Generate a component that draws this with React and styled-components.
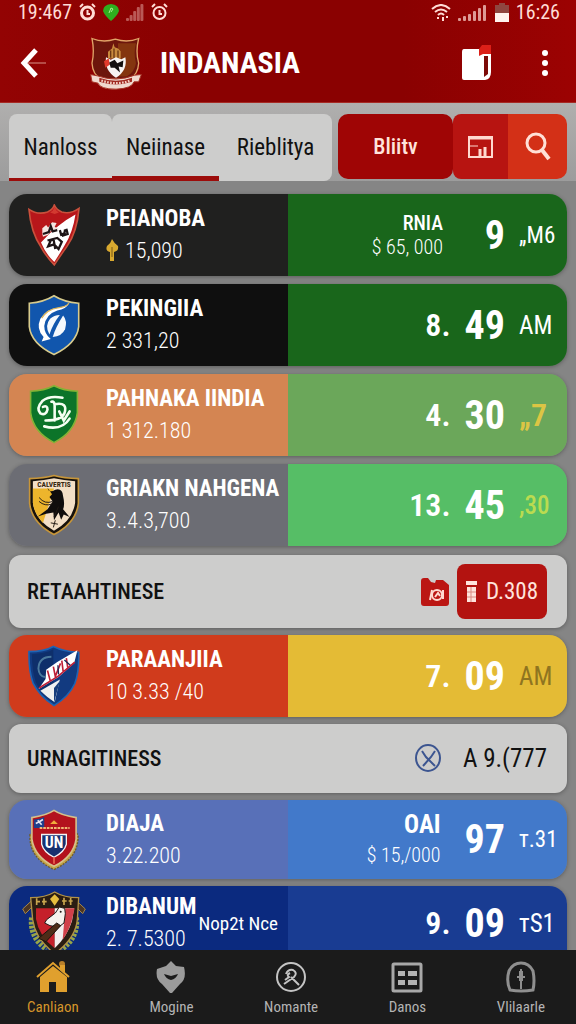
import React from "react";
import styled, { createGlobalStyle } from "styled-components";

const GlobalStyle = createGlobalStyle`
  * {
    box-sizing: border-box;
  }
  body {
    margin: 0;
    background: #858585;
    font-family: "Roboto Condensed", "Liberation Sans Narrow", Roboto, sans-serif;
  }
  button {
    font-family: inherit;
    border: 0;
    padding: 0;
    background: none;
    color: inherit;
    cursor: pointer;
  }
  svg {
    display: block;
    flex: none;
  }
`;

const Screen = styled.div`
  display: flex;
  flex-direction: column;
  height: 100vh;
  background: #858585;
`;

const Header = styled.header`
  flex: none;
  color: #fff;
  background: linear-gradient(90deg, #930303, #8a0101 30%, #8a0101 70%, #9c0202);
  border-bottom: 1px solid #a62a24;
`;

const StatusBar = styled.div`
  display: flex;
  align-items: center;
  height: 24px;
  padding: 0 16px 0 18px;
  gap: 7px;
  color: #ffdcd5;
`;

const Clock = styled.span`
  font-size: 20px;
  line-height: 24px;
`;

const Spacer = styled.span`
  flex: 1;
`;

const TitleBar = styled.div`
  display: flex;
  align-items: center;
  height: 78px;
  padding: 0 27px 0 20px;
`;

const BackButton = styled.button`
  margin-right: 42px;
`;

const Title = styled.h1`
  flex: 1;
  margin: 0 0 0 18px;
  font-size: 30px;
  line-height: 40px;
  font-weight: 700;
`;

const MoreButton = styled.button`
  margin-left: 48px;
`;

const Filters = styled.div`
  flex: none;
  display: flex;
  align-items: flex-start;
  gap: 6px;
  padding: 11px 9px 0;
  background: linear-gradient(180deg, #b0afae, #9c9c9c);
`;

const Tabs = styled.nav`
  flex: 323;
  display: flex;
  height: 67px;
`;

const Tab = styled.button`
  flex: ${(p) => p.$grow};
  font-size: 23px;
  line-height: 28px;
  color: #111;
  background: #cdcdcc;
  box-shadow: inset 0 -${(p) => p.$line}px 0 #9c0c0a;
  border-radius: ${(p) => p.$radius};
`;

const Actions = styled.div`
  flex: 229;
  display: flex;
  height: 65px;
`;

const Action = styled.button`
  flex: ${(p) => p.$grow};
  display: flex;
  align-items: center;
  justify-content: center;
  font-size: 22px;
  font-weight: 500;
  color: #ffe3dc;
  background: ${(p) => p.$bg};
  border-radius: ${(p) => p.$radius};
`;

const List = styled.main`
  flex: 1;
  min-height: 0;
  overflow-y: auto;
  scrollbar-width: none;
  padding: 13px 9px 0;
`;

const Group = styled.section`
  display: flex;
  flex-direction: column;
  gap: ${(p) => p.$gap}px;
  margin-bottom: 9px;
`;

const Row = styled.article`
  flex: none;
  display: grid;
  grid-template-columns: 1fr 1fr;
  height: ${(p) => p.$height || 82}px;
  border-radius: ${(p) => (p.$open ? "18px 18px 0 0" : "18px")};
  overflow: hidden;
  color: #fff;
  box-shadow: 0 1px 4px rgba(0, 0, 0, 0.3);
`;

const Team = styled.div`
  display: flex;
  align-items: center;
  min-width: 0;
  padding-left: 13px;
  background: ${(p) => p.$bg};
`;

const CrestBox = styled.div`
  flex: none;
  display: flex;
  justify-content: center;
  width: 64px;
  margin-right: 20px;
`;

const TeamText = styled.div`
  white-space: nowrap;
`;

const Name = styled.h2`
  margin: 0;
  font-size: 23px;
  line-height: 32px;
  font-weight: 700;
`;

const Detail = styled.p`
  display: flex;
  align-items: center;
  gap: 6px;
  margin: 0;
  font-size: 22px;
  line-height: 32px;
  font-weight: 300;
`;

const Note = styled.span`
  margin-left: 2px;
  font-size: 19px;
  white-space: nowrap;
`;

const Score = styled.div`
  display: flex;
  align-items: center;
  justify-content: flex-end;
  padding-right: 10px;
  background: ${(p) => p.$bg};
`;

const Prize = styled.div`
  margin-right: 24px;
  text-align: right;
  font-size: 20px;
  line-height: ${(p) => (p.$strong ? 30 : 24)}px;
  font-weight: 300;
`;

const PrizeName = styled.div`
  font-size: ${(p) => (p.$strong ? 25 : 20)}px;
  font-weight: ${(p) => (p.$strong ? 700 : 500)};
`;

const Whole = styled.span`
  margin-right: 14px;
  font-size: 32px;
  font-weight: 600;
`;

const Big = styled.span`
  min-width: 38px;
  margin-right: 14px;
  text-align: right;
  font-size: 40px;
  font-weight: 700;
`;

const Suffix = styled.span`
  width: 38px;
  font-size: ${(p) => p.$size || 25}px;
  font-weight: ${(p) => p.$weight || 400};
  white-space: nowrap;
  color: ${(p) => p.$color || "#fff"};
`;

const Panel = styled.section`
  flex: none;
  display: flex;
  align-items: center;
  height: ${(p) => p.$height}px;
  padding: 0 20px 0 18px;
  border-radius: 12px;
  color: #111;
  background: #cdcdcc;
  box-shadow: 0 1px 4px rgba(0, 0, 0, 0.3);
`;

const PanelTitle = styled.h3`
  flex: 1;
  margin: 0;
  font-size: 22px;
  line-height: 28px;
  font-weight: 500;
`;

const PanelButton = styled.button`
  display: flex;
  align-items: center;
  justify-content: center;
  gap: 9px;
  width: 90px;
  height: 55px;
  margin-left: 8px;
  border-radius: 8px;
  font-size: 23px;
  color: #ffe3dc;
  background: #b31310;
`;

const PanelValue = styled.span`
  margin-left: 21px;
  font-size: 25px;
`;

const BottomNav = styled.nav`
  flex: none;
  display: flex;
  justify-content: space-between;
  height: 74px;
  padding: 11px 31px 0 27px;
  background: #1b1b1b;
`;

const NavItem = styled.a`
  display: flex;
  flex-direction: column;
  align-items: center;
  gap: 4px;
  font-size: 15px;
  line-height: 20px;
  text-decoration: none;
  color: ${(p) => (p.$active ? "#d5952a" : "#b4b4b4")};
`;

const Shield = ({ children }) => (
  <svg width="52" height="62" viewBox="0 0 160 190" aria-hidden="true">
    {children}
  </svg>
);

const crests = {
  red: (
    <Shield>
      <path d="M3 16Q30 34 60 24Q76 18 81 3Q88 18 104 24Q130 32 157 13Q151 86 120 130Q95 165 81 187Q55 160 40 132Q9 86 3 16Z" fill="#b8161a" stroke="#c9503c" strokeWidth="5" />
      <path d="M146 32Q90 62 40 118Q56 156 81 178Q98 152 112 128Q138 88 146 32Z" fill="#fff" />
      <path d="M76 20L82 8L88 20L95 26L82 30L68 26Z" fill="#d33a30" />
      <path d="M44 74l12 -10 6 8 12 -16 14 2 -6 12 12 4 -8 10 -14 -4 -10 14 -16 6 -2 -10z" fill="#f3e4e0" />
      <path d="M46 92l18 -6 6 -18 6 16 14 -4M60 112l30 -8 14 12 -10 22 -14 -14 -18 6 8 -18M98 80l4 14 10 -4 2 -12M118 76l4 16 -18 6M78 106l6 32" fill="none" stroke="#1d1416" strokeWidth="7" />
    </Shield>
  ),
  blue: (
    <Shield>
      <path d="M4 28Q50 24 80 5Q110 24 156 28V100Q150 152 80 186Q10 152 4 100Z" fill="#1156ad" stroke="#d8cb8c" strokeWidth="5" />
      <path d="M126 28Q118 46 90 50Q54 62 50 98Q50 122 70 138L42 146L48 132Q24 108 38 76Q58 44 94 42Q114 40 126 28Z" fill="#fff" />
      <path d="M126 28Q118 40 92 42Q60 46 42 74" fill="none" stroke="#d8b35a" strokeWidth="4" />
      <path d="M108 66Q122 82 114 108Q104 130 76 132Q84 104 108 66Z" fill="#f4f8fc" />
      <path d="M98 64Q76 92 66 124Q50 98 68 76Q80 64 98 64Z" fill="#f4f8fc" />
    </Shield>
  ),
  green: (
    <Shield>
      <path d="M8 22Q50 20 80 5Q110 20 152 22V88Q144 148 80 180Q16 148 8 88Z" fill="#0c7429" stroke="#85b236" strokeWidth="5" />
      <path d="M106 42Q66 34 44 52Q24 74 38 90Q56 98 60 78Q60 64 46 70M72 54Q82 52 82 66V112M82 62Q124 54 112 90Q102 112 54 112M96 84L110 112L128 84M50 130Q104 144 128 106" fill="none" stroke="#f5fff2" strokeWidth="8" strokeLinecap="round" />
    </Shield>
  ),
  gold: (
    <Shield>
      <path d="M5 14Q50 12 80 4Q110 12 155 14V90Q148 150 80 186Q12 150 5 90Z" fill="#17120c" stroke="#c7963a" strokeWidth="5" />
      <path d="M15 22Q50 20 80 13Q110 20 145 22V88Q138 142 80 174Q22 142 15 88Z" fill="#f3dfc6" />
      <path d="M15 44H80L46 150Q18 120 15 88Z" fill="#edb52c" />
      <text x="80" y="40" textAnchor="middle" fontSize="23" fontWeight="700" fill="#35250e">
        CALVERTIS
      </text>
      <path d="M60 42Q64 60 84 48Q106 42 108 68Q114 92 108 108L128 132L110 124L102 140L94 118L80 142L78 118L56 122L30 130L60 108L76 84L66 70L74 62Z" fill="#100d0c" />
      <path d="M34 72Q52 94 76 84M34 84Q52 100 74 92M94 100L80 132M84 142L78 164M70 150L92 154" fill="none" stroke="#221a14" strokeWidth="3" />
    </Shield>
  ),
  navy: (
    <Shield>
      <path d="M3 20Q50 20 78 4Q110 20 156 22Q158 80 144 118Q126 158 80 186Q36 158 16 118Q2 80 3 20Z" fill="#123a80" stroke="#1d64b5" strokeWidth="5" />
      <path d="M12 28Q56 26 78 13V176Q40 150 24 114Q12 80 12 28Z" fill="#0e2f6b" />
      <path d="M72 36Q34 36 32 72Q34 96 52 98" fill="none" stroke="#4b7a9e" strokeWidth="6" />
      <path d="M152 16L142 56L94 98L32 136L54 104L56 76L90 52L124 32Z" fill="#fff" />
      <path d="M60 78L68 108M78 66L84 96L100 56M104 48L108 80M118 40L122 68M34 132L92 96L144 52" fill="none" stroke="#bf1f37" strokeWidth="5" />
      <path d="M92 62L94 90M112 46L130 62" fill="none" stroke="#1a2b5a" strokeWidth="4" />
      <path d="M38 140L98 106L82 176Q56 158 38 140Z" fill="#f1f1f1" />
      <path d="M80 132V178L98 110Z" fill="#173d7c" />
    </Shield>
  ),
  crimson: (
    <Shield>
      <path d="M6 78Q2 150 80 186Q158 150 154 78L140 70H20Z" fill="#c4a548" stroke="#6c5a2a" strokeWidth="4" strokeDasharray="6 4" />
      <path d="M12 26Q56 20 80 4Q104 20 148 26V92Q140 146 80 176Q20 146 12 92Z" fill="#b3121d" stroke="#d5c08a" strokeWidth="5" />
      <path d="M18 32Q34 30 50 24V58H18Z" fill="#1f3f8c" />
      <path d="M24 44l12 -6 10 -6M30 34l12 14" fill="none" stroke="#e6e6f0" strokeWidth="5" />
      <path d="M68 46L80 34L92 46Z" fill="#f1ad3d" />
      <path d="M36 58H128" stroke="#f1ba74" strokeWidth="6" strokeDasharray="8 3" />
      <path d="M42 78H118V108Q112 132 80 148Q48 132 42 108Z" fill="#17306f" stroke="#f3f3f3" strokeWidth="4" />
      <text x="80" y="120" textAnchor="middle" fontSize="48" fontWeight="700" fill="#fff">
        UN
      </text>
      <path d="M80 148V168" stroke="#e25a4a" strokeWidth="6" />
    </Shield>
  ),
  laurel: (
    <svg width="64" height="64" viewBox="0 0 192 192" aria-hidden="true">
      <path d="M30 80Q24 140 74 174M162 80Q168 140 118 174" fill="none" stroke="#97a548" strokeWidth="18" strokeDasharray="8 4" />
      <path d="M2 54L28 30L36 42L10 68ZM190 54L164 30L156 42L182 68Z" fill="#4c3524" stroke="#a38548" strokeWidth="3" />
      <path d="M26 20Q70 20 98 3Q126 20 170 20L166 86Q160 144 98 188Q40 144 32 86Z" fill="#2a1d12" stroke="#b19247" strokeWidth="4" />
      <path d="M42 52H98V172Q50 134 42 84Z" fill="#c5202a" />
      <path d="M98 52H156L150 90Q136 136 98 172Z" fill="#f3eeee" />
      <path d="M130 52H158L148 94Q136 128 122 146Z" fill="#d1404a" />
      <path d="M42 32h12M60 32h14M120 30h14M140 30h12M44 22v20M66 22v20M126 20v22M146 20v22" stroke="#c9a64e" strokeWidth="5" />
      <path d="M84 24L98 10L112 24L98 44Z" fill="#e5bd3e" />
      <path d="M74 86L100 66L112 48L128 52L130 68L126 96L110 108L84 104L68 96Z" fill="#f6f2ee" stroke="#201818" strokeWidth="3" />
      <path d="M50 142L104 96L116 104L72 152Z" fill="#4d2c18" stroke="#1b120e" strokeWidth="3" />
      <circle cx="116" cy="62" r="3" fill="#201818" />
    </svg>
  ),
};

const GarudaLogo = () => (
  <svg width="52" height="53" viewBox="0 0 156 158" aria-hidden="true">
    <path d="M6 4Q40 18 76 6Q112 18 146 4Q136 44 146 78Q144 112 118 126H34Q8 112 6 78Q14 44 6 4Z" fill="#6d160c" stroke="#e0a468" strokeWidth="4" />
    <path d="M84 18H138Q130 46 138 78Q134 104 110 118H84Z" fill="#84350f" />
    <path d="M70 18L74 30L84 34L92 42V64H54V44L66 34Z" fill="#c88a3e" />
    <path d="M62 40V62M72 34V64M84 40V62" stroke="#6a3512" strokeWidth="4" />
    <path d="M48 60L62 68L78 60L94 66L106 60Q114 98 78 122Q42 98 48 60Z" fill="#f7f4f2" />
    <path d="M42 72L56 64L60 82L46 92Z" fill="#e23a2c" />
    <path d="M58 76L74 68L82 78L100 70L98 90L86 88L90 106L74 92L62 92Z" fill="#14100f" />
    <path d="M2 112L22 116Q78 136 134 114L154 112L146 134L132 134Q126 154 78 156Q30 156 24 138L6 134Z" fill="#f0d9cf" stroke="#a63427" strokeWidth="3" />
    <path d="M28 122Q78 140 126 122V134Q78 150 28 134Z" fill="#a02820" />
    <path d="M34 130Q78 146 122 130" fill="none" stroke="#f3cfc4" strokeWidth="7" strokeDasharray="5 4" />
  </svg>
);

const AlarmIcon = ({ bold }) => (
  <svg width="17" height="18" viewBox="0 0 34 36" fill="none" stroke="currentColor" strokeWidth={bold ? 6 : 4}>
    <circle cx="17" cy="20" r="12" />
    <path d="M2 8L8 2M32 8L26 2M17 14V22H22" strokeWidth="4" />
  </svg>
);

const PinIcon = () => (
  <svg width="16" height="17" viewBox="0 0 16 17">
    <path d="M8 0Q16 1 16 7Q14 12 8 17Q2 12 0 7Q0 1 8 0Z" fill="#2fae1e" />
    <path d="M6 9L8 4L10 5L8 8" fill="none" stroke="#a9f091" strokeWidth="1" />
  </svg>
);

const SignalBars = ({ width, heights, opacity }) => (
  <svg width={width} height="18" viewBox={`0 0 ${width} 18`} fill="currentColor" opacity={opacity}>
    {heights.map((h, i) => (
      <rect key={i} x={(i * width) / heights.length} y={18 - h} width="3" height={h} rx="1" />
    ))}
  </svg>
);

const WifiIcon = () => (
  <svg width="20" height="17" viewBox="0 0 20 17" fill="none" stroke="currentColor" strokeWidth="2">
    <path d="M1 5Q10 -3 19 5M4 8Q10 3 16 8M7 11Q10 8 13 11" />
    <path d="M7 13V15M12 13V17M16 12V14" />
  </svg>
);

const BatteryIcon = () => (
  <svg width="14" height="19" viewBox="0 0 14 19">
    <path d="M4 0H10V2H14V10H0V2H4Z" fill="#8f4640" />
    <rect y="10" width="14" height="9" fill="#fff3ef" />
  </svg>
);

const teams = [
  {
    name: "PEIANOBA",
    detail: "15,090",
    trophy: true,
    crest: "red",
    left: "#20201f",
    right: "#19661b",
    prize: ["RNIA", "$ 65, 000"],
    big: "9",
    suffix: "„M6",
    suffixSize: 23,
  },
  { name: "PEKINGIIA", detail: "2 331,20", crest: "blue", left: "#0f0f0f", right: "#19661b", whole: "8.", big: "49", suffix: "AM" },
  {
    name: "PAHNAKA IINDIA",
    detail: "1 312.180",
    crest: "green",
    left: "#d48552",
    right: "#6ba75a",
    whole: "4.",
    big: "30",
    suffix: "„7",
    suffixColor: "#dcc544",
    suffixSize: 32,
    suffixWeight: 600,
  },
  { name: "GRIAKN NAHGENA", detail: "3..4.3,700", crest: "gold", left: "#6c6d74", right: "#56be66", whole: "13.", big: "45", suffix: ",30", suffixColor: "#bbdb50", suffixWeight: 500 },
];

const laterTeams = [
  { name: "PARAANJIIA", detail: "10 3.33 /40", crest: "navy", left: "#d03b1c", right: "#e4bb35", whole: "7.", big: "09", suffix: "AM", suffixColor: "#8f7420" },
  {
    name: "DIAJA",
    detail: "3.22.200",
    crest: "crimson",
    left: "#5870b8",
    right: "#4279ca",
    height: 79,
    prize: ["OAI", "$ 15,/000"],
    strongPrize: true,
    big: "97",
    suffix: "т.31",
    suffixSize: 23,
  },
  { name: "DIBANUM", detail: "2. 7.5300", crest: "laurel", left: "#0b2a7f", right: "#193c92", height: 74, open: true, note: "Nop2t Nce", whole: "9.", big: "09", suffix: "тS1" },
];

const TrophyIcon = () => (
  <svg width="13" height="24" viewBox="0 0 13 24" fill="#d9a92f">
    <path d="M6 0Q8 4 12 7Q13 12 8 13V22H4V13Q-1 12 1 7Q5 4 6 0Z" />
    <path d="M6 8V18" stroke="#7a5a17" strokeWidth="1" />
  </svg>
);

const TeamRow = ({ team }) => (
  <Row $height={team.height} $open={team.open}>
    <Team $bg={team.left}>
      <CrestBox>{crests[team.crest]}</CrestBox>
      <TeamText>
        <Name>{team.name}</Name>
        <Detail>
          {team.trophy && <TrophyIcon />}
          {team.detail}
        </Detail>
      </TeamText>
      {team.note && <Note>{team.note}</Note>}
    </Team>
    <Score $bg={team.right}>
      {team.prize && (
        <Prize $strong={team.strongPrize}>
          <PrizeName $strong={team.strongPrize}>{team.prize[0]}</PrizeName>
          {team.prize[1]}
        </Prize>
      )}
      {team.whole && <Whole>{team.whole}</Whole>}
      <Big>{team.big}</Big>
      <Suffix $color={team.suffixColor} $size={team.suffixSize} $weight={team.suffixWeight}>
        {team.suffix}
      </Suffix>
    </Score>
  </Row>
);

const navItems = [
  {
    label: "Canliaon",
    icon: (
      <svg width="34" height="32" viewBox="0 0 34 32">
        <path d="M4 16V31H13V21H20V31H31V16L17 5Z" fill="#e0a02e" />
        <path d="M1 16L17 2L33 16" fill="none" stroke="#e0a02e" strokeWidth="2" />
        <circle cx="26" cy="3" r="3" fill="#b9802a" />
        <path d="M24 4H29V12L24 8Z" fill="#e0a02e" />
      </svg>
    ),
  },
  {
    label: "Mogine",
    icon: (
      <svg width="30" height="32" viewBox="0 0 30 32">
        <path d="M15 0L20 5L28 6Q31 18 24 23L16 32H14L6 23Q-1 18 1 8L10 5Z" fill="#9b9b9b" />
        <path d="M8 13L15 15L22 13Q20 18 15 19Q10 18 8 13Z" fill="#1b1b1b" />
      </svg>
    ),
  },
  {
    label: "Nomante",
    icon: (
      <svg width="32" height="32" viewBox="0 0 32 32" fill="none" stroke="#c4c4c4" strokeWidth="2">
        <circle cx="16" cy="16" r="14" />
        <path d="M11 13Q13 8 18 9Q23 12 19 16L9 23M16 16L24 24M10 19L14 16Q11 14 15 12" />
      </svg>
    ),
  },
  {
    label: "Danos",
    icon: (
      <svg width="32" height="32" viewBox="0 0 32 32">
        <rect x="2" y="3" width="28" height="27" rx="1" fill="none" stroke="#a8a8a8" strokeWidth="3" />
        <path d="M7 10H14V15H7ZM17 10H26V15H17ZM7 19H14V24H7ZM17 19H26V24H17Z" fill="#b4b4b4" />
      </svg>
    ),
  },
  {
    label: "Vlilaarle",
    icon: (
      <svg width="30" height="32" viewBox="0 0 30 32" fill="none" stroke="#8f8f8f">
        <path d="M4 29Q0 20 3 10Q7 2 15 2Q23 2 27 10Q29 20 27 29Q15 31 4 29Z" strokeWidth="3" />
        <path d="M15 8V28M11 16H19" strokeWidth="2" />
        <path d="M15 10V20" strokeWidth="4" />
      </svg>
    ),
  },
];

const App = () => {
  return (
    <>
      <GlobalStyle />
      <Screen>
        <Header>
          <StatusBar>
            <Clock>19:467</Clock>
            <AlarmIcon bold />
            <PinIcon />
            <SignalBars width={18} heights={[3, 6, 10, 14, 17]} opacity={0.4} />
            <AlarmIcon />
            <Spacer />
            <WifiIcon />
            <SignalBars width={30} heights={[3, 5, 7, 10, 13, 16]} opacity={0.7} />
            <BatteryIcon />
            <Clock>16:26</Clock>
          </StatusBar>
          <TitleBar>
            <BackButton aria-label="Back">
              <svg width="28" height="32" viewBox="0 0 28 32" fill="none">
                <path d="M16 3L4 16L16 29" stroke="#fff" strokeWidth="5" />
                <path d="M8 16H26" stroke="#d9958a" strokeWidth="1" />
              </svg>
            </BackButton>
            <GarudaLogo />
            <Title>INDANASIA</Title>
            <button aria-label="Library">
              <svg width="32" height="38" viewBox="0 0 32 38">
                <path d="M3 5H20L30 10V28Q30 35 24 36H3Q1 36 1 34V8Q1 5 3 5Z" fill="#fff" />
                <path d="M23 12H27V30L23 33Z" fill="#7c0a08" />
                <path d="M21 1H30V10H22L18 12V5Z" fill="#dc2018" />
              </svg>
            </button>
            <MoreButton aria-label="More">
              <svg width="8" height="28" viewBox="0 0 8 28" fill="#fff">
                <circle cx="4" cy="4" r="3" />
                <circle cx="4" cy="14" r="3" />
                <circle cx="4" cy="24" r="3" />
              </svg>
            </MoreButton>
          </TitleBar>
        </Header>

        <Filters>
          <Tabs>
            <Tab $grow={103} $line={3} $radius="8px 8px 0 0">
              Nanloss
            </Tab>
            <Tab $grow={107} $line={5} $radius="8px 0 0 0">
              Neiinase
            </Tab>
            <Tab $grow={113} $line={0} $radius="0 8px 8px 0">
              Rieblitya
            </Tab>
          </Tabs>
          <Actions>
            <Action $grow={115} $bg="#9f0505" $radius="10px">
              Bliitv
            </Action>
            <Action $grow={55} $bg="#b71411" $radius="8px 0 0 8px" aria-label="Calendar">
              <svg width="27" height="24" viewBox="0 0 27 24" fill="none" stroke="#ffd9d0">
                <path d="M2 2H25V22H2Z" strokeWidth="2" />
                <path d="M1 3H26" strokeWidth="3" />
                <path d="M3 11H11" strokeWidth="1" />
                <path d="M13 14V21M18 12V21" strokeWidth="3" />
              </svg>
            </Action>
            <Action $grow={59} $bg="#d33017" $radius="0 10px 10px 0" aria-label="Search">
              <svg width="26" height="29" viewBox="0 0 26 29" fill="none" stroke="#ffe0d6">
                <circle cx="11" cy="11" r="9" strokeWidth="3" />
                <path d="M17 18L24 27" strokeWidth="4" />
              </svg>
            </Action>
          </Actions>
        </Filters>

        <List>
          <Group $gap={8}>
            {teams.map((team) => (
              <TeamRow key={team.name} team={team} />
            ))}
          </Group>
          <Group $gap={7}>
            <Panel $height={73}>
              <PanelTitle>RETAAHTINESE</PanelTitle>
              <svg width="28" height="28" viewBox="0 0 28 28">
                <path d="M0 3Q0 0 3 0H7L10 4L14 5L15 2H22L28 7V25Q28 28 25 28H3Q0 28 0 25Z" fill="#bb1613" />
                <circle cx="16" cy="17" r="5" fill="none" stroke="#ffd9d0" strokeWidth="2" />
                <path d="M9 22L11 12M22 12V21M14 19L17 15L19 18" fill="none" stroke="#ffd9d0" strokeWidth="2" />
              </svg>
              <PanelButton>
                <svg width="11" height="21" viewBox="0 0 11 21" fill="#ffe3dc">
                  <path d="M0 0H11V4H0ZM1 6H10V21H1Z" />
                  <path d="M1 11H10M1 16H10M5 6V21" stroke="#d98a80" strokeWidth="1" />
                </svg>
                D.308
              </PanelButton>
            </Panel>
            <TeamRow team={laterTeams[0]} />
            <Panel $height={69}>
              <PanelTitle>URNAGITINESS</PanelTitle>
              <svg width="27" height="29" viewBox="0 0 27 29" fill="none" stroke="#3c5590" strokeWidth="2">
                <ellipse cx="13" cy="14" rx="12" ry="13" />
                <path d="M7 7L11 13L20 22M20 7L16 13L8 22" />
              </svg>
              <PanelValue>A 9.(777</PanelValue>
            </Panel>
            <TeamRow team={laterTeams[1]} />
            <TeamRow team={laterTeams[2]} />
          </Group>
        </List>

        <BottomNav>
          {navItems.map((item, i) => (
            <NavItem key={item.label} href="#" $active={i === 0}>
              {item.icon}
              {item.label}
            </NavItem>
          ))}
        </BottomNav>
      </Screen>
    </>
  );
};

export default App;
